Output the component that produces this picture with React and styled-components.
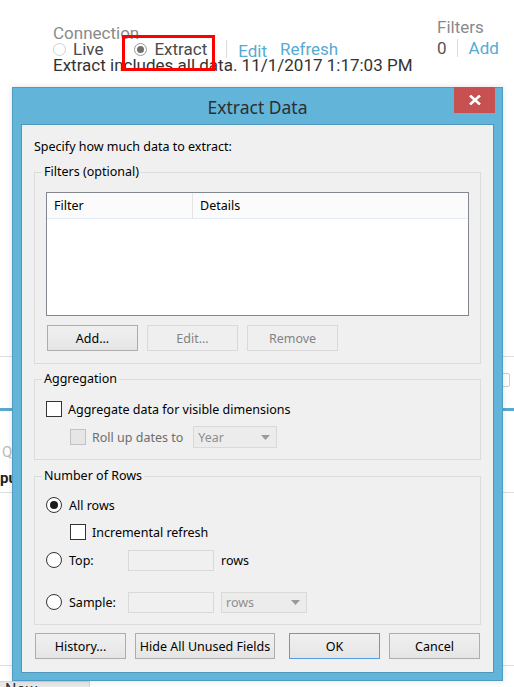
import React from "react";
import styled, { createGlobalStyle, css } from "styled-components";

const GlobalStyle = createGlobalStyle`
  html, body { margin: 0; padding: 0; background: #fff; }
  body { width: 514px; height: 687px; overflow: hidden; }
  #root { width: 514px; height: 687px; }
  * { box-sizing: border-box; }
`;

const Page = styled.div`
  position: relative;
  width: 514px;
  height: 687px;
  overflow: hidden;
  background: #fff;
  font-family: Roboto, "Liberation Sans", sans-serif;
`;

/* ---------- page header behind dialog ---------- */
const Header = styled.header`
  display: grid;
  grid-template-columns: 384px auto;
  padding: 19px 0 0 53px;
  height: 87px;
  font-size: 17px;
`;

const Column = styled.div`
  display: flex;
  flex-direction: column;
  padding-top: ${(p) => p.$top || 0}px;
`;

const Caption = styled.div`
  line-height: 16px;
  color: #8a8a8a;
  white-space: nowrap;
`;

const OptionRow = styled.div`
  display: flex;
  align-items: center;
  height: 16px;
  margin-top: ${(p) => p.$mt || 0}px;
  white-space: nowrap;
`;

const HeadRadio = styled.span`
  width: 13px;
  height: 13px;
  border-radius: 50%;
  border: 1px solid ${(p) => (p.$on ? "#9a9a9a" : "#d0d0d0")};
  background: #fff;
  display: inline-flex;
  align-items: center;
  justify-content: center;
  margin-right: 7px;
  &::after {
    content: "";
    width: 7px;
    height: 7px;
    border-radius: 50%;
    background: ${(p) => (p.$on ? "#6f6f6f" : "transparent")};
  }
`;

const OptLabel = styled.span`
  color: #4a4a4a;
`;

const HeadOption = styled.span`
  display: inline-flex;
  align-items: center;
  margin-left: ${(p) => p.$ml || 0}px;
  position: relative;
  ${(p) =>
    p.$marked &&
    css`
      &::after {
        content: "";
        position: absolute;
        left: -12px;
        right: -8px;
        top: -4px;
        bottom: -12px;
        border: 3px solid #ff0000;
        z-index: 2;
      }
    `}
`;

const VSep = styled.span`
  width: 1px;
  height: 18px;
  background: #dcdcdc;
  margin: 0 ${(p) => p.$r}px 0 ${(p) => p.$l}px;
`;

const Link = styled.span`
  color: #56aad5;
  padding-top: ${(p) => p.$drop || 0}px;
  margin-left: ${(p) => p.$ml || 0}px;
`;

const Info = styled.div`
  line-height: 16px;
  color: #333;
  white-space: nowrap;
`;

const Count = styled.span`
  color: #555;
`;

/* ---------- backdrop pieces ---------- */
const Backdrop = styled.div`
  display: flex;
  flex-direction: column;
`;

const Rule = styled.div`
  height: ${(p) => p.$h || 1}px;
  background: ${(p) => p.$c || "#dedede"};
  margin-top: ${(p) => p.$mt || 0}px;
`;

const BoxRow = styled.div`
  display: flex;
  justify-content: flex-end;
  margin-top: ${(p) => p.$mt}px;
  padding-right: 4px;
`;

const SmallBox = styled.div`
  width: 22px;
  height: 14px;
  border: 1px solid #cfcfcf;
  border-radius: 2px;
`;

const BgText = styled.div`
  margin-top: ${(p) => p.$mt}px;
  line-height: 18px;
  font-size: 15px;
  padding-left: ${(p) => p.$pl || 0}px;
  color: ${(p) => (p.$bold ? "#222" : "#bdbdbd")};
  font-weight: ${(p) => (p.$bold ? 700 : 400)};
  white-space: nowrap;
`;

const Tab = styled.div`
  margin-top: ${(p) => p.$mt}px;
  width: 90px;
  height: 20px;
  background: #e8e8e8;
  border-top: 1px solid #d4d4d4;
  border-right: 1px solid #d4d4d4;
  padding-left: 5px;
  font-size: 16px;
  line-height: 15px;
  color: #333;
`;

/* ---------- dialog ---------- */
const Dialog = styled.div`
  position: absolute;
  left: 12px;
  top: 87px;
  width: 491px;
  height: 594px;
  background: #62b4d9;
  border: 1px solid #4e9cc4;
  padding: 0 8px 7px 8px;
  display: flex;
  flex-direction: column;
  font-family: "Noto Sans", "Open Sans", sans-serif;
  box-shadow: 0 0 6px rgba(0, 0, 0, 0.12);
  z-index: 3;
`;

const TitleBar = styled.div`
  height: 36px;
  flex: none;
  display: flex;
  align-items: center;
  justify-content: center;
  font-size: 17.5px;
  color: #2e2e2e;
  padding-top: 1px;
`;

const CloseButton = styled.div`
  position: absolute;
  top: -1px;
  right: 7px;
  width: 41px;
  height: 26px;
  background: #c75050;
  display: flex;
  align-items: center;
  justify-content: center;
`;

const Client = styled.div`
  flex: 1;
  background: #f0f0f0;
  border: 1px solid #4f96bd;
  padding: 13px 12px 0 12px;
  display: flex;
  flex-direction: column;
  font-size: 12.5px;
  color: #000;
`;

const Intro = styled.div`
  line-height: 18px;
`;

const Group = styled.section`
  display: flex;
  flex-direction: column;
  margin-top: ${(p) => p.$mt}px;
  border: 1px solid #dcdcdc;
  padding: 0 11px ${(p) => p.$pb}px 11px;
`;

const Legend = styled.div`
  align-self: flex-start;
  margin: -10px 0 ${(p) => p.$gap}px -4px;
  padding: 0 2px;
  line-height: 18px;
  background: #f0f0f0;
`;

const ListView = styled.div`
  height: 124px;
  border: 1px solid #828790;
  background: #fff;
`;

const ListHeader = styled.div`
  display: grid;
  grid-template-columns: 146px 1fr;
  height: 26px;
  background: #fbfbfb;
  border-bottom: 1px solid #e2ebf6;
`;

const ColHead = styled.div`
  display: flex;
  align-items: center;
  padding-left: 7px;
  border-right: 1px solid ${(p) => (p.$last ? "transparent" : "#e5e5e5")};
`;

const ButtonRow = styled.div`
  display: flex;
  gap: ${(p) => p.$gap || 9}px;
  margin-top: ${(p) => p.$mt || 0}px;
  padding-left: ${(p) => p.$pl || 0}px;
`;

const Button = styled.div`
  width: ${(p) => p.$w || 91}px;
  height: 26px;
  display: flex;
  align-items: center;
  justify-content: center;
  white-space: nowrap;
  border: 1px solid ${(p) => (p.$disabled ? "#d9d9d9" : p.$default ? "#569de5" : "#adadad")};
  background: ${(p) =>
    p.$disabled ? "#efefef" : "linear-gradient(#f0f0f0, #e5e5e5)"};
  color: ${(p) => (p.$disabled ? "#838383" : "#000")};
`;

const Bottom = styled.div`
  display: flex;
  justify-content: space-between;
  margin-top: 8px;
  padding: 0 1px;
`;

const Row = styled.div`
  display: flex;
  align-items: center;
  height: 22px;
  margin-top: ${(p) => p.$mt || 0}px;
  padding-left: ${(p) => p.$indent || 0}px;
  white-space: nowrap;
`;

const Check = styled.span`
  width: 16px;
  height: 16px;
  flex: none;
  border: 1px solid ${(p) => (p.$disabled ? "#c2c2c2" : "#333")};
  background: ${(p) => (p.$disabled ? "#e6e6e6" : "#fff")};
  margin-right: 6px;
`;

const Radio = styled.span`
  width: 16px;
  height: 16px;
  flex: none;
  border-radius: 50%;
  border: 1px solid #333;
  background: #fff;
  display: inline-flex;
  align-items: center;
  justify-content: center;
  margin-right: 7px;
  &::after {
    content: "";
    width: 8px;
    height: 8px;
    border-radius: 50%;
    background: ${(p) => (p.$on ? "#1c1c1c" : "transparent")};
  }
`;

const RadioOption = styled.span`
  display: inline-flex;
  align-items: center;
  width: ${(p) => p.$w || "auto"};
`;

const Text = styled.span`
  color: ${(p) => (p.$disabled ? "#6d6d6d" : "#000")};
  margin-right: ${(p) => p.$mr || 0}px;
`;

const Field = styled.span`
  width: 86px;
  height: 21px;
  border: 1px solid #d9d9d9;
  background: #f0f0f0;
  margin-right: 7px;
`;

const Combo = styled.span`
  width: ${(p) => p.$w}px;
  height: ${(p) => p.$h || 22}px;
  border: 1px solid #d9d9d9;
  background: #ececec;
  color: #8e8e8e;
  display: flex;
  align-items: center;
  justify-content: space-between;
  padding: 0 6px 0 4px;
`;

const Arrow = () => (
  <svg width="9" height="5" viewBox="0 0 9 5">
    <path d="M0 0 H9 L4.5 5 Z" fill="#9a9a9a" />
  </svg>
);

export default function App() {
  return (
    <Page>
      <GlobalStyle />
      <Header>
        <Column $top={6}>
          <Caption>Connection</Caption>
          <OptionRow>
            <HeadOption>
              <HeadRadio />
              <OptLabel>Live</OptLabel>
            </HeadOption>
            <HeadOption $ml={31} $marked>
              <HeadRadio $on />
              <OptLabel>Extract</OptLabel>
            </HeadOption>
            <VSep $l={19} $r={11} />
            <Link $drop={3}>Edit</Link>
            <Link $ml={13}>Refresh</Link>
          </OptionRow>
          <Info>Extract includes all data. 11/1/2017 1:17:03 PM</Info>
        </Column>
        <Column>
          <Caption>Filters</Caption>
          <OptionRow $mt={5}>
            <Count>0</Count>
            <VSep $l={10} $r={11} />
            <Link>Add</Link>
          </OptionRow>
        </Column>
      </Header>

      <Backdrop>
        <Rule $mt={269} />
        <BoxRow $mt={16}>
          <SmallBox />
        </BoxRow>
        <Rule $mt={21} $h={3} $c="#5aa8d1" />
        <BgText $mt={32} $pl={2}>QL</BgText>
        <BgText $mt={8} $bold>pu</BgText>
        <Rule $mt={5} />
        <Rule $mt={172} />
        <Tab $mt={15}>Now</Tab>
      </Backdrop>

      <Dialog>
        <TitleBar>Extract Data</TitleBar>
        <CloseButton>
          <svg width="12" height="10" viewBox="0 0 12 10">
            <path d="M1 0.5 L11 9.5 M11 0.5 L1 9.5" stroke="#fff" strokeWidth="2.6" />
          </svg>
        </CloseButton>
        <Client>
          <Intro>Specify how much data to extract:</Intro>

          <Group $mt={16} $pb={12}>
            <Legend $gap={11}>Filters (optional)</Legend>
            <ListView>
              <ListHeader>
                <ColHead>Filter</ColHead>
                <ColHead $last>Details</ColHead>
              </ListHeader>
            </ListView>
            <ButtonRow $mt={9} $pl={1}>
              <Button>Add...</Button>
              <Button $disabled>Edit...</Button>
              <Button $disabled>Remove</Button>
            </ButtonRow>
          </Group>

          <Group $mt={15} $pb={11}>
            <Legend $gap={10}>Aggregation</Legend>
            <Row>
              <Check />
              <Text>Aggregate data for visible dimensions</Text>
            </Row>
            <Row $mt={6} $indent={24}>
              <Check $disabled />
              <Text $disabled $mr={10}>Roll up dates to</Text>
              <Combo $w={84}>
                <span>Year</span>
                <Arrow />
              </Combo>
            </Row>
          </Group>

          <Group $mt={16} $pb={11}>
            <Legend $gap={9}>Number of Rows</Legend>
            <Row>
              <Radio $on />
              <Text>All rows</Text>
            </Row>
            <Row $mt={5} $indent={24}>
              <Check />
              <Text>Incremental refresh</Text>
            </Row>
            <Row $mt={6}>
              <RadioOption $w="82px">
                <Radio />
                <Text>Top:</Text>
              </RadioOption>
              <Field />
              <Text>rows</Text>
            </Row>
            <Row $mt={20}>
              <RadioOption $w="82px">
                <Radio />
                <Text>Sample:</Text>
              </RadioOption>
              <Field />
              <Combo $w={86} $h={21}>
                <span>rows</span>
                <Arrow />
              </Combo>
            </Row>
          </Group>

          <Bottom>
            <ButtonRow>
              <Button>History...</Button>
              <Button $w={140}>Hide All Unused Fields</Button>
            </ButtonRow>
            <ButtonRow>
              <Button $default>OK</Button>
              <Button>Cancel</Button>
            </ButtonRow>
          </Bottom>
        </Client>
      </Dialog>
    </Page>
  );
}
